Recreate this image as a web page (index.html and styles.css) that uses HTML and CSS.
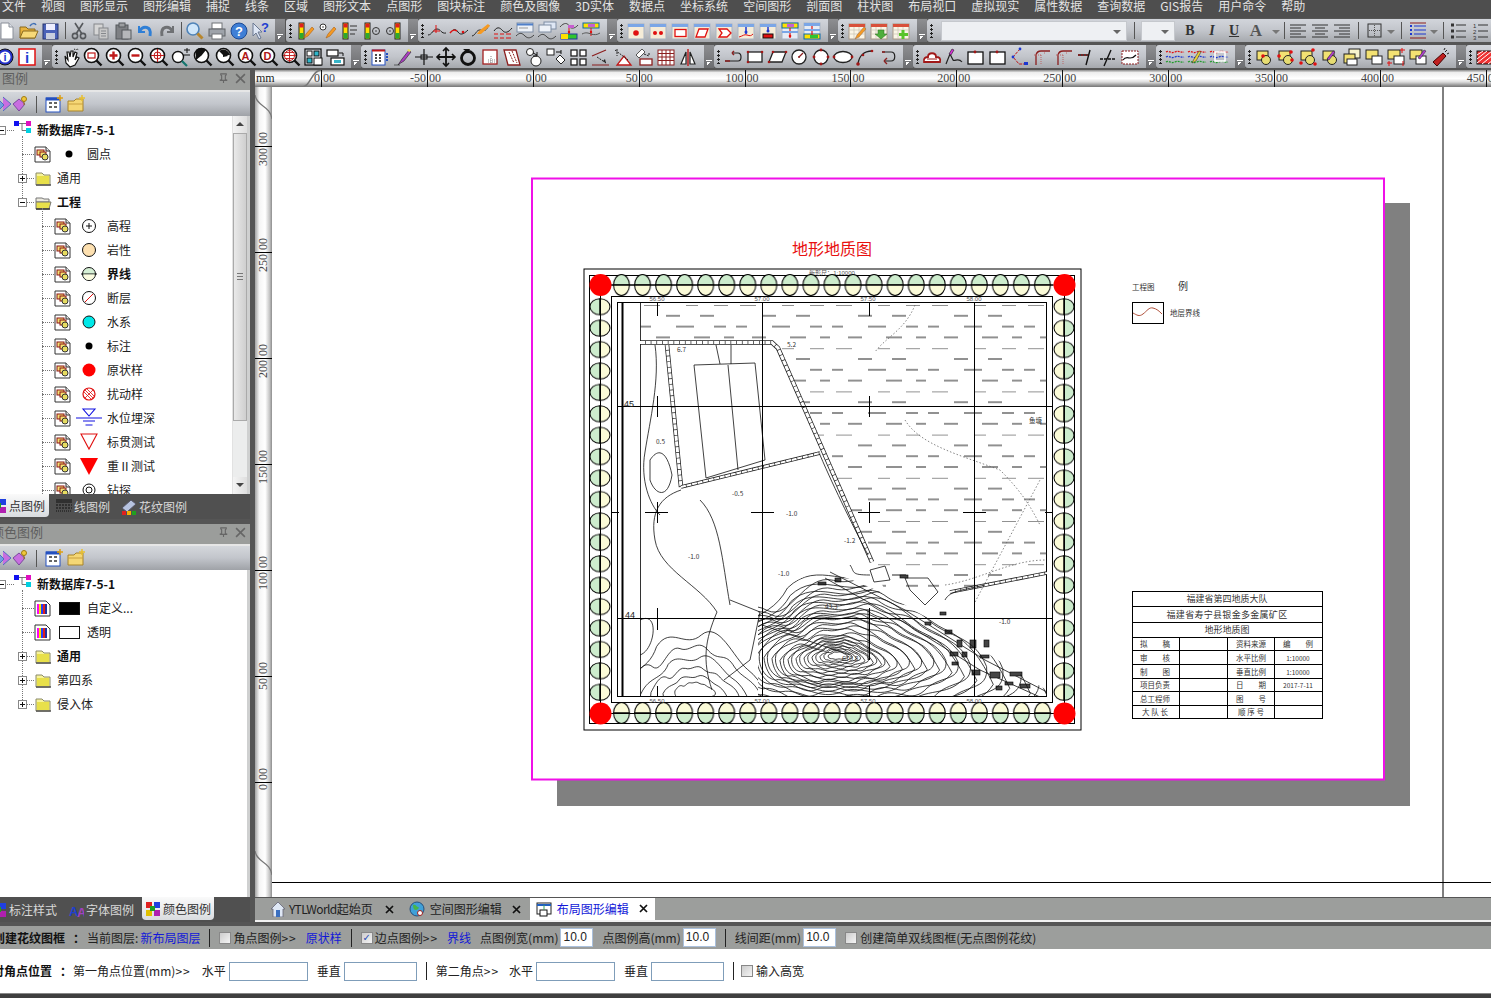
FILE: index.html
```html
<!DOCTYPE html>
<html lang="zh-CN">
<head>
<meta charset="utf-8">
<title>YTLWorld</title>
<link rel="stylesheet" href="styles.css">
</head>
<body>
<svg class="defs" aria-hidden="true">
<defs>
<g id="new"><path d="M4 2h8l4 4v12H4z" fill="#fff" stroke="#8a8f99"/><path d="M12 2v4h4" fill="#dfe3ea" stroke="#8a8f99"/></g>
<g id="open"><path d="M1 6h6l2 2h7v9H1z" fill="#e8b23c" stroke="#8a6a1e"/><path d="M4 10h15l-3 7H1z" fill="#f7d978" stroke="#8a6a1e"/><path d="M11 5c2-3 5-3 6-1" fill="none" stroke="#3f6fb5" stroke-width="1.5"/></g>
<g id="save"><rect x="2" y="3" width="15" height="15" fill="#4b62b8" stroke="#27356f"/><rect x="5" y="3" width="9" height="6" fill="#eef"/><rect x="5" y="12" width="9" height="6" fill="#c9cfdf"/></g>
<g id="cut"><path d="M6 2l7 11M14 2L7 13" stroke="#55585c" stroke-width="1.6" fill="none"/><circle cx="6" cy="15" r="2.6" fill="none" stroke="#55585c" stroke-width="1.6"/><circle cx="14" cy="15" r="2.6" fill="none" stroke="#55585c" stroke-width="1.6"/></g>
<g id="copy"><rect x="3" y="3" width="9" height="11" fill="#d5d5d5" stroke="#85888c"/><rect x="8" y="7" width="9" height="11" fill="#c8c8c8" stroke="#85888c"/><path d="M10 10h5M10 12.500h5M10 15h5" stroke="#85888c"/></g>
<g id="paste"><rect x="3" y="4" width="12" height="14" fill="#7e8084" stroke="#55585c"/><rect x="6" y="2" width="6" height="4" fill="#9b9da0" stroke="#55585c"/><rect x="9" y="9" width="9" height="9" fill="#b5b7ba" stroke="#55585c"/></g>
<g id="undo"><path d="M4 5v6h6" fill="none" stroke="#2f7fd6" stroke-width="2"/><path d="M4.500 10.500C8 4 17 5 15 15" fill="none" stroke="#2f7fd6" stroke-width="3"/></g>
<g id="redo"><path d="M16 5v6h-6" fill="none" stroke="#6f7174" stroke-width="2"/><path d="M15.500 10.500C12 4 3 5 5 15" fill="none" stroke="#6f7174" stroke-width="3"/></g>
<g id="find"><circle cx="8" cy="8" r="6" fill="#cfe6fa" stroke="#4f83b8" stroke-width="1.6"/><path d="M12.500 12.500l5 5" stroke="#b8862c" stroke-width="3"/></g>
<g id="print"><rect x="5" y="2" width="10" height="6" fill="#fff" stroke="#6f7276"/><rect x="2" y="8" width="16" height="7" fill="#9ea3aa" stroke="#5f6266"/><rect x="5" y="13" width="10" height="5" fill="#fff" stroke="#6f7276"/></g>
<g id="help"><circle cx="10" cy="10" r="8" fill="#3f7fd6" stroke="#1e4a93"/><text x="10" y="14.500" class="gl">?</text></g>
<g id="what"><path d="M2 2v13l3-3 3 6 2-1-3-6h4z" fill="#dfe7f5" stroke="#6a7892"/><text x="14" y="11" class="gl blue">?</text></g>
<g id="bar"><rect x="4" y="2" width="5" height="16" fill="#ffdf00" stroke="#222"/><rect x="4.500" y="2.500" width="4" height="4" fill="#e02020"/><rect x="4.500" y="12" width="4" height="5.500" fill="#2da82d"/></g>
<g id="pen"><path d="M9 17l2-4 6-7 2 2-6 7z" fill="#f59a23" stroke="#a8601a" stroke-width=".6"/></g>
<g id="i1"><use href="#bar"/><use href="#pen"/></g>
<g id="i2"><circle cx="6" cy="6" r="3" fill="#fff" stroke="#333"/><circle cx="6" cy="6" r=".8" fill="#333"/><use href="#pen"/></g>
<g id="i3"><use href="#bar"/><path d="M11 5h7M11 9h7M11 13h5" stroke="#333"/></g>
<g id="i4"><use href="#bar"/><circle cx="15" cy="10" r="3.500" fill="none" stroke="#333"/><circle cx="15" cy="10" r=".8" fill="#333"/></g>
<g id="i5" transform="translate(8 0)"><use href="#bar"/><circle cx="-1" cy="10" r="3.500" fill="none" stroke="#333"/><circle cx="-1" cy="10" r=".8" fill="#333"/></g>
<g id="c1"><path d="M1 14c4 0 5-6 9-6s4 5 9 4" fill="none" stroke="#222"/><path d="M9 4v8M6 10h7" stroke="#e01010"/></g>
<g id="c2"><path d="M1 12c4-5 6-4 8-1s5 3 10-2" fill="none" stroke="#222"/><path d="M1 12c3-4 5-3 7-2" fill="none" stroke="#e01010" stroke-width="1.400"/><circle cx="14" cy="11" r="1.300" fill="#e01010"/></g>
<g id="c3"><path d="M1 15c4-1 4-6 8-6s5 3 9-5" fill="none" stroke="#222"/><path d="M6 13l2-3 9-7 2 2-9 8z" fill="#f59a23"/></g>
<g id="c4"><path d="M1 10c4-6 7-2 9 0s5 2 9-3" fill="none" stroke="#222"/><path d="M1 13h4M7 13h4M13 13h5M1 17h4M7 17h4M13 17h5" stroke="#e01010"/></g>
<g id="w5"><rect x="2" y="2" width="16" height="9" fill="#eef2f8" stroke="#7f8da3"/><path d="M2 3.500h16" stroke="#4f7fc9" stroke-width="2"/><path d="M4 7h9" stroke="#999"/><path d="M1 15c4-4 6-3 9 0s6 2 9-1" fill="none" stroke="#444"/></g>
<g id="w6"><rect x="7" y="1" width="12" height="7" fill="#dfe7f5" stroke="#7f8da3"/><rect x="2" y="4" width="12" height="7" fill="#eef2f8" stroke="#7f8da3"/><path d="M1 16c4-4 6-3 9 0s6 2 9-1" fill="none" stroke="#444"/></g>
<g id="w7"><path d="M1 6c4-5 8-4 9-1s6 3 9-1" fill="none" stroke="#444"/><path d="M10 7v7" stroke="#e01010"/><circle cx="10" cy="11" r="1.200" fill="#e01010"/><rect x="2" y="13" width="16" height="5" fill="#2ec52e" stroke="#20399c"/><rect x="2" y="13" width="7" height="5" fill="#ffe000"/><path d="M9 7h6v-3H9z" fill="#c75fd0"/></g>
<g id="w8"><rect x="2" y="2" width="16" height="5" fill="#ffe000" stroke="#0a6ba8"/><rect x="7" y="3" width="7" height="3" fill="#c75fd0"/><path d="M10 7v8" stroke="#e01010"/><circle cx="10" cy="11" r="1.200" fill="#e01010"/><path d="M1 13c4-2 6-1 9 0s6 1 9-1" fill="none" stroke="#555"/></g>
<g id="win"><rect x="2" y="3" width="16" height="15" fill="#f5ecd8" stroke="#a9b3c2"/><rect x="2" y="3" width="16" height="3" fill="#7ba6e6"/></g>
<g id="p1"><use href="#win"/><circle cx="10" cy="12" r="2.800" fill="#e01010"/></g>
<g id="p2"><use href="#win"/><circle cx="7" cy="12" r="2" fill="#e01010"/><circle cx="13" cy="12" r="2" fill="#e01010"/></g>
<g id="p3"><use href="#win"/><rect x="5" y="8.500" width="11" height="7" fill="#fff" stroke="#e01010" stroke-width="1.300"/></g>
<g id="p4"><use href="#win"/><path d="M7 8h9l-3 8H4z" fill="#fff" stroke="#e01010" stroke-width="1.300"/></g>
<g id="p5"><use href="#win"/><path d="M5 8h8l4 4-4 4H5l3-4z" fill="#fff" stroke="#e01010" stroke-width="1.300"/></g>
<g id="p6"><use href="#win"/><path d="M10 6v7" stroke="#1d37d0" stroke-width="1.500"/><circle cx="10" cy="11" r="1.500" fill="#1d37d0"/><path d="M3 16c4-1 5-3 8-2s4 1 6-1" fill="none" stroke="#e01010"/></g>
<g id="p7"><use href="#win"/><path d="M10 6v5" stroke="#1d37d0" stroke-width="1.500"/><circle cx="10" cy="10" r="1.500" fill="#1d37d0"/><rect x="5" y="13" width="10" height="4" fill="#e01010" stroke="#111"/></g>
<g id="p8"><rect x="2" y="2" width="16" height="16" fill="#e6ecf5" stroke="#a9b3c2"/><rect x="2" y="2" width="16" height="5" fill="#ffe000" stroke="#0a6ba8"/><rect x="7" y="3" width="7" height="3" fill="#c75fd0"/><path d="M10 7v10" stroke="#e01010" stroke-width="1.200"/><circle cx="10" cy="15" r="1.300" fill="#e01010"/><path d="M2 11h16" stroke="#7ba6e6" stroke-width="2"/></g>
<g id="p9"><rect x="2" y="2" width="16" height="16" fill="#e6ecf5" stroke="#a9b3c2"/><path d="M2 3.500h16" stroke="#7ba6e6" stroke-width="3"/><rect x="2" y="13" width="16" height="5" fill="#ffe000" stroke="#0a6ba8"/><rect x="8" y="14" width="8" height="3" fill="#2ec52e"/><path d="M10 5v9" stroke="#e01010" stroke-width="1.200"/><path d="M2 9h16" stroke="#7ba6e6" stroke-width="2"/></g>
<g id="tab"><rect x="2" y="3" width="16" height="15" fill="#faf5e6" stroke="#a98"/><rect x="2" y="3" width="16" height="3" fill="#d8503a"/><path d="M2 9h16M2 13h16M7 6v12M12 6v12" stroke="#c9c3b3" stroke-width=".7"/></g>
<g id="t1"><use href="#tab"/><path d="M8 18l2-4 7-8 2 2-7 8z" fill="#f59a23" stroke="#865" stroke-width=".5"/></g>
<g id="t2"><use href="#tab"/><path d="M9 9h6v4h3l-6 5-6-5h3z" fill="#4fae3c" stroke="#2a6e1e" stroke-width=".5"/></g>
<g id="t3"><use href="#tab"/><path d="M12 9v9M8 13.500h9" stroke="#58c42a" stroke-width="3"/></g>
<g id="ia"><circle cx="10" cy="10" r="8" fill="#2430c8" stroke="#111"/><circle cx="10" cy="10" r="5.500" fill="#fff"/><text x="10" y="14" class="gl blue bd">i</text></g>
<g id="ib"><rect x="2" y="2" width="16" height="16" fill="#fff" stroke="#e01010" stroke-width="1.500"/><text x="10" y="15.500" class="gl blue bd big">i</text></g>
<g id="hand"><path d="M4 9l3 4-1-8 2 0 1 5 1-6 2 0 0 6 2-5 2 1-2 7 2-3 2 1-4 7-5 2-4-4z" fill="#fff" stroke="#111" stroke-width="1.200"/><path d="M13 2l2 1 1-1 2 1" stroke="#111" stroke-dasharray="1 1" fill="none"/></g>
<g id="mag"><circle cx="8.500" cy="8.500" r="7" fill="#fff" stroke="#111" stroke-width="1.600"/><path d="M13.500 13.500l5 5" stroke="#111" stroke-width="2.400"/></g>
<g id="m1"><use href="#mag"/><rect x="5" y="6" width="7" height="5" fill="none" stroke="#c01818" stroke-width="1.200"/></g>
<g id="m2"><use href="#mag"/><path d="M8.500 4.500v8M4.500 8.500h8" stroke="#c01818" stroke-width="2.400"/></g>
<g id="m3"><use href="#mag"/><path d="M4.500 8.500h8" stroke="#c01818" stroke-width="2.400"/></g>
<g id="m4"><use href="#mag"/><path d="M8.500 2v13M2 8.500h13" stroke="#c01818" stroke-width="1.100"/><circle cx="8.500" cy="8.500" r="3.500" fill="none" stroke="#c01818"/></g>
<g id="m5"><circle cx="7" cy="10" r="5.500" fill="#fff" stroke="#111" stroke-width="1.400"/><path d="M11 14l5 5" stroke="#14766e" stroke-width="2.200"/><path d="M13 3h6M16 1v5M13 8h6" stroke="#111"/></g>
<g id="m6"><use href="#mag"/><path d="M8.500 8.500L13 3a7 7 0 0 0-10 0L3 13z" fill="#111"/></g>
<g id="m7"><use href="#mag"/><path d="M8.500 8.500L15 8a7 7 0 0 0-11-4z" fill="#111"/><path d="M8 4l5 5-5 1z" fill="#111"/></g>
<g id="m8"><use href="#mag"/><text x="8.500" y="13" class="gl red bd">A</text></g>
<g id="m9"><use href="#mag"/><text x="8.500" y="13" class="gl red bd">D</text></g>
<g id="m10"><use href="#mag"/><circle cx="8.500" cy="8.500" r="5" fill="none" stroke="#c01818"/><path d="M8.500 2v13M2 8.500h13M3.500 5.500h10M3.500 11.500h10" stroke="#c01818" stroke-width=".9"/></g>
<g id="gb"><rect x="2" y="2" width="16" height="16" fill="#e8eef5" stroke="#111" stroke-width="1.300"/><rect x="4" y="4" width="5" height="5" fill="#fff" stroke="#111"/><rect x="11" y="4" width="5" height="5" fill="#2fb5c9" stroke="#111"/><rect x="4" y="11" width="5" height="5" fill="#2fb5c9" stroke="#111"/><rect x="11" y="11" width="8" height="7" fill="#fff" stroke="#111"/></g>
<g id="gc"><rect x="2" y="3" width="11" height="6" fill="#fff" stroke="#111" stroke-width="1.200"/><path d="M14 6h4v3" fill="none" stroke="#111"/><rect x="6" y="11" width="13" height="7" fill="#fff" stroke="#111" stroke-width="1.200"/><rect x="9" y="13" width="7" height="3" fill="#37b5c9"/></g>
<g id="d1"><rect x="2" y="3" width="13" height="15" fill="#fff" stroke="#2450c0"/><path d="M2 3.500h13" stroke="#c01818" stroke-width="2"/><path d="M5 8h2M9 8h2M5 11h2M9 11h2M5 14h2M9 14h2" stroke="#111" stroke-width="1.500"/><path d="M17 6v8" stroke="#2450c0" stroke-dasharray="2 1" stroke-width="2"/></g>
<g id="d2"><path d="M2 18h6M6 18l4-6 7-9 2 2-7 9-5 3z" fill="#a93fc0" stroke="#222" stroke-width=".6"/><path d="M15 3l2 2 2-1-2-2z" fill="#e8e25a"/></g>
<g id="d3"><path d="M10 2v16M1 10h18" stroke="#111" stroke-width="1.200"/><rect x="7" y="8" width="6" height="4" fill="none" stroke="#111"/></g>
<g id="d4"><path d="M10 1v18M1 10h18" stroke="#111" stroke-width="1.800"/><path d="M7 4l3-3 3 3M7 16l3 3 3-3M4 7l-3 3 3 3M16 7l3 3-3 3" fill="none" stroke="#111" stroke-width="1.600"/></g>
<g id="d5"><circle cx="10" cy="11" r="6.500" fill="none" stroke="#111" stroke-width="2.800"/><path d="M5 2l7 0-2 4z" fill="#111"/></g>
<g id="d6"><rect x="3" y="3" width="14" height="14" fill="#fff" stroke="#a32020" stroke-width="1.300"/><path d="M8 13h9M8 15h9M11 9v8" stroke="#888" stroke-dasharray="1 1"/></g>
<g id="d7"><path d="M2 3h12l4 15H6z" fill="#fff" stroke="#8c1f1f" stroke-width="1.300"/><path d="M7 5l5 11M10 4l5 12" stroke="#8c1f1f" stroke-dasharray="2 1"/></g>
<g id="d8"><circle cx="6" cy="5" r="3.500" fill="#fff" stroke="#222"/><circle cx="12" cy="14" r="5" fill="#fff" stroke="#222"/><path d="M9 6l4 2M13 5v4h-4" fill="none" stroke="#111"/></g>
<g id="d9"><rect x="1" y="2" width="7" height="6" fill="#fff" stroke="#222"/><path d="M10 12l4-4 5 5-4 4z" fill="#fff" stroke="#222"/><path d="M10 5h5M15 3v4" stroke="#111"/></g>
<g id="d10"><rect x="3" y="3" width="6" height="6" fill="#fff" stroke="#222" stroke-width="1.300"/><rect x="12" y="3" width="6" height="6" fill="#fff" stroke="#222" stroke-width="1.300"/><rect x="3" y="12" width="6" height="6" fill="#fff" stroke="#222" stroke-width="1.300"/><rect x="12" y="12" width="6" height="6" fill="#fff" stroke="#222" stroke-width="1.300"/></g>
<g id="d11"><path d="M2 18h17M2 9l14-6" stroke="#8c1f1f" stroke-width="1.200"/><path d="M7 10l9 6" stroke="#222" stroke-dasharray="2 1"/><path d="M13 14l3 2-1-4" fill="#222"/></g>
<g id="d12"><path d="M5 18h14L12 9z" fill="#fff" stroke="#c01818" stroke-width="1.300"/><path d="M3 3l13 10M5 2v7" stroke="#222" stroke-dasharray="2 1"/></g>
<g id="d13"><rect x="6" y="12" width="12" height="6" fill="#fff" stroke="#8c1f1f" stroke-width="1.300"/><path d="M2 8l6-6 3 3-6 6z" fill="#fff" stroke="#555"/><path d="M10 7l5 2M15 6v3" stroke="#222" stroke-dasharray="2 1"/></g>
<g id="d14"><rect x="2" y="3" width="16" height="15" fill="#fff" stroke="#8c1f1f"/><path d="M2 6.500h16M2 10h16M2 13.500h16M6 3v15M10 3v15M14 3v15" stroke="#8c1f1f"/></g>
<g id="d15"><path d="M3 17l5-12v12zM17 17l-5-12v12z" fill="#fff" stroke="#222" stroke-width="1.200"/><path d="M10 2v17" stroke="#c01818" stroke-width="1.400"/></g>
<g id="e1"><path d="M2 14h13c4 0 4-8 0-8H9" fill="none" stroke="#222" stroke-width="1.200"/><path d="M2 14h5M9 6l2-2M9 6l2 2" stroke="#8c1f1f" stroke-width="1.500"/></g>
<g id="e2"><rect x="3" y="5" width="14" height="10" fill="#fff" stroke="#222" stroke-width="1.300"/><g fill="#a01818"><circle cx="3" cy="5" r="1.300"/><circle cx="17" cy="5" r="1.300"/><circle cx="3" cy="15" r="1.300"/></g></g>
<g id="e3"><path d="M6 5h13l-4 10H2z" fill="#fff" stroke="#222" stroke-width="1.300"/><g fill="#a01818"><circle cx="6" cy="5" r="1.300"/><circle cx="19" cy="5" r="1.300"/><circle cx="2" cy="15" r="1.300"/></g></g>
<g id="e4"><circle cx="10" cy="10" r="7" fill="#fff" stroke="#222" stroke-width="1.300"/><path d="M10 10l4-4" stroke="#8c1f1f" stroke-width="1.300"/><circle cx="10" cy="10" r="1" fill="#8c1f1f"/></g>
<g id="e5"><circle cx="10" cy="10" r="7" fill="#fff" stroke="#222" stroke-width="1.300"/><g fill="#a01818"><circle cx="10" cy="3" r="1.400"/><circle cx="3" cy="10" r="1.400"/><circle cx="17" cy="10" r="1.400"/><circle cx="10" cy="17" r="1.400"/></g></g>
<g id="e6"><ellipse cx="10" cy="10" rx="9" ry="5.500" fill="#fff" stroke="#222" stroke-width="1.300"/><circle cx="1" cy="10" r="1.400" fill="#a01818"/><circle cx="19" cy="10" r="1.400" fill="#a01818"/></g>
<g id="e7"><path d="M3 17C4 9 9 4 17 4" fill="none" stroke="#222" stroke-width="1.300"/><circle cx="3" cy="17" r="1.800" fill="#a01818"/><circle cx="8" cy="8" r="1.300" fill="#a01818"/><circle cx="17" cy="4" r="1.300" fill="#a01818"/></g>
<g id="e8"><path d="M5 5h9c5 0 5 9 0 9H7" fill="none" stroke="#222" stroke-width="1.200"/><path d="M7 14l3-3M7 14l3 3M5 5h3" stroke="#8c1f1f" stroke-width="1.400"/></g>
<g id="f1"><path d="M2 15c-1-4 2-5 4-5 0-5 8-5 8 0 3 0 5 1 4 5z" fill="#fff" stroke="#a01818" stroke-width="1.800"/><path d="M5 12h10" stroke="#a01818"/></g>
<g id="f2"><path d="M2 17l4-10 3 6c2 2 5-3 9 2" fill="none" stroke="#222" stroke-width="1.200"/><path d="M5 7l3-5 2 1-3 5z" fill="#d72fd7" stroke="#222" stroke-width=".6"/></g>
<g id="f3"><rect x="2" y="5" width="15" height="12" fill="#fff" stroke="#111" stroke-width="1.300"/><circle cx="9" cy="5" r="1.400" fill="#a01818"/></g>
<g id="f4"><path d="M10 2L3 10l6 7h7" fill="none" stroke="#c01818" stroke-dasharray="3 1"/><g fill="#1d37d0"><circle cx="10" cy="2" r="1.400"/><circle cx="3" cy="10" r="1.400"/><rect x="14" y="15" width="4" height="3"/></g></g>
<g id="f5"><path d="M4 18v-10q1-4 5-4h9" fill="none" stroke="#8c1f1f" stroke-width="1.300"/><path d="M2 8h7M9 8v9M12 6h2" stroke="#b66" stroke-dasharray="1 1"/></g>
<g id="f6"><path d="M2 8h10M14 3l-4 15" stroke="#111" stroke-width="1.400"/><path d="M2 8h10" stroke="#8c1f1f" stroke-dasharray="2 1" stroke-width="1.600"/></g>
<g id="f7"><path d="M2 12h16" stroke="#111" stroke-width="1.400" stroke-dasharray="3 1"/><path d="M13 3L6 19" stroke="#111" stroke-width="1.400"/></g>
<g id="f8"><rect x="2" y="4" width="16" height="13" fill="#fff" stroke="#8c1f1f" stroke-dasharray="2 1"/><path d="M3 13c4-6 7 2 13-5" fill="none" stroke="#111" stroke-width="1.200"/></g>
<g id="wv"><path d="M1 5c3-2 5 2 9 0s6 1 9 0" fill="none" stroke="#e01010" stroke-width="1.300" stroke-dasharray="2 1"/><path d="M1 10c3-2 5 2 9 0s6 1 9 0" fill="none" stroke="#1d37d0" stroke-width="1.300" stroke-dasharray="2 1"/><path d="M1 15c3-2 5 2 9 0s6 1 9 0" fill="none" stroke="#1f9c2a" stroke-width="1.300" stroke-dasharray="2 1"/></g>
<g id="g1"><use href="#wv"/></g>
<g id="g2"><use href="#wv"/><path d="M5 16l2-4 5-8 2 1-5 9z" fill="#e8d13a" stroke="#222" stroke-width=".5"/></g>
<g id="g3"><use href="#wv"/><rect x="6" y="5" width="10" height="9" fill="none" stroke="#fff" stroke-width="1.600"/></g>
<g id="ys"><rect x="3" y="4" width="11" height="9" fill="#f3e172" stroke="#222"/><circle cx="12" cy="13" r="4.500" fill="#e6dc72" stroke="#222"/></g>
<g id="h1"><use href="#ys"/><circle cx="9" cy="9" r="1.800" fill="#e01010"/></g>
<g id="h2"><use href="#ys"/><circle cx="3" cy="9" r="1.800" fill="#e01010"/><circle cx="15" cy="5" r="1.800" fill="#e01010"/><circle cx="16" cy="13" r="1.800" fill="#e01010"/></g>
<g id="h3"><use href="#ys"/><circle cx="15" cy="3" r="1.800" fill="#e01010"/><circle cx="3" cy="16" r="1.800" fill="#e01010"/><circle cx="17" cy="17" r="1.800" fill="#e01010"/></g>
<g id="h4"><use href="#ys"/><path d="M7 12l6-8 2 1-6 8z" fill="#b040d0" stroke="#222" stroke-width=".5"/></g>
<g id="h5"><rect x="7" y="2" width="11" height="9" fill="#f8f4cc" stroke="#222"/><rect x="2" y="7" width="11" height="9" fill="#f3e172" stroke="#222"/><rect x="5" y="12" width="10" height="6" fill="#fff" stroke="#222"/></g>
<g id="h6"><rect x="2" y="3" width="12" height="9" fill="#f3e172" stroke="#222"/><rect x="8" y="9" width="10" height="8" fill="#fff" stroke="#222"/></g>
<g id="h7"><use href="#h6"/><path d="M16 1v5M14 3h5M3 14v5M1 16h5M17 14v5" stroke="#e01010"/></g>
<g id="h8"><use href="#h6"/><path d="M10 11l6-8 2 1-6 8z" fill="#b040d0" stroke="#222" stroke-width=".5"/></g>
<g id="h9"><path d="M3 15L13 6l3 3-9 10z" fill="#c02020" stroke="#400"/><path d="M15 5l2-2M17 7l2-1M14 3l1-2" stroke="#222"/></g>
<g id="h10"><rect x="2" y="4" width="16" height="13" fill="#e33" stroke="#111"/><path d="M2 8l6-4M2 12l10-8M2 16l15-12M7 17L18 8M13 17l5-4" stroke="#fff"/></g>
<g id="al"><path d="M2 4h16M2 7h11M2 10h16M2 13h11M2 16h16" stroke="#333"/></g>
<g id="ac"><path d="M2 4h16M5 7h10M2 10h16M5 13h10M2 16h16" stroke="#333"/></g>
<g id="ar"><path d="M2 4h16M7 7h11M2 10h16M7 13h11M2 16h16" stroke="#333"/></g>
<g id="box"><rect x="3" y="3" width="13" height="13" fill="none" stroke="#333"/><path d="M9.500 4v11M4 9.500h11" stroke="#555" stroke-dasharray="1 1"/></g>
<g id="lst"><path d="M2 2h16" stroke="#8c1f1f"/><path d="M2 17h16" stroke="#8c1f1f"/><path d="M2 5h2M2 9h2M2 13h2" stroke="#1d37d0" stroke-width="2"/><path d="M6 5h12M6 9h12M6 13h12" stroke="#1d37d0"/></g>
<g id="bul"><path d="M3 4h3M3 10h3M3 16h3" stroke="#333" stroke-width="3"/><path d="M8 4h10M8 10h10M8 16h10" stroke="#333"/></g>
<g id="num"><text x="3" y="7" class="tiny">1</text><text x="3" y="13" class="tiny">2</text><text x="3" y="19" class="tiny">3</text><path d="M8 4h10M8 10h10M8 16h10" stroke="#333"/></g>
<g id="gm2"><path d="M10 5l6 5-6 7-6-7z" fill="#c86ee0" stroke="#7a4a9c"/><circle cx="15" cy="5" r="2.500" fill="#f0c83c" stroke="#a07a10"/><path d="M15 7v4" stroke="#a07a10"/></g>
<g id="gm1"><path d="M10 3l8 7-8 7" fill="#c86ee0" stroke="#4f6fc0"/><path d="M6 6l5 5-5 5" fill="#6fa0e0" stroke="#4f6fc0"/></g>
<g id="pnew"><rect x="2" y="4" width="14" height="14" fill="#fff" stroke="#2450c0"/><path d="M2 5h14" stroke="#2450c0" stroke-width="3"/><path d="M5 9h3M10 9h3M5 13h3M10 13h3" stroke="#333" stroke-width="1.500"/><path d="M16 1v6M13 4h6" stroke="#e0a010" stroke-width="1.500"/></g>
<g id="pfol"><path d="M2 7h6l2-2h7v12H2z" fill="#f5d775" stroke="#a8842a"/><path d="M2 10h15" stroke="#c9a040"/><path d="M16 1v6M13 4h6" stroke="#e8c030" stroke-width="1.500"/></g>
<g id="lg"><path d="M1 1h11l4 4v11H1z" fill="#fff" stroke="#333"/><path d="M12 1v4h4" fill="#e5e5e5" stroke="#333"/><rect x="3" y="4" width="7" height="5" fill="#f3e172" stroke="#8c1515"/><rect x="6" y="6" width="6" height="5" fill="#f3e172" stroke="#8c1515"/><circle cx="11" cy="11" r="3" fill="#e6dc60" stroke="#333"/></g>
<g id="col"><path d="M1 1h11l4 4v11H1z" fill="#fff" stroke="#333"/><rect x="3" y="4" width="2" height="10" fill="#ff00ff"/><rect x="5" y="4" width="2" height="10" fill="#f4e000"/><rect x="7" y="4" width="2" height="10" fill="#2040ff"/><rect x="9" y="4" width="2" height="10" fill="#e02020"/><rect x="11" y="4" width="2" height="10" fill="#2030a0"/></g>
<g id="fd"><path d="M1 3h6l2 2h6v10H1z" fill="#f7f39a" stroke="#8a8a6a"/><rect x="2" y="6" width="12" height="8" fill="#e8e04a"/><path d="M1 15h15" stroke="#555" stroke-width="1.500"/></g>
<g id="fo"><path d="M1 4h6l2 1h5v3H1z" fill="#eceadf" stroke="#777"/><path d="M1 8h15l-2 7H1z" fill="#e8e04a" stroke="#777"/><path d="M1 15h14" stroke="#333" stroke-width="1.500"/></g>
<g id="rt"><rect x="0" y="0" width="5" height="5" fill="#1010f0"/><rect x="12" y="0" width="5" height="5" fill="#e010c0"/><rect x="12" y="7" width="5" height="5" fill="#00d0e0"/><path d="M5 2.500h7M8 2.500v7h4" fill="none" stroke="#555" stroke-width=".8"/></g>
<g id="sp1"><circle cx="12" cy="12" r="6.500" fill="#fff" stroke="#111"/><path d="M12 9v6M9 12h6" stroke="#111"/></g>
<g id="sp2"><circle cx="12" cy="12" r="6.500" fill="#fde0b0" stroke="#111"/></g>
<g id="sp3"><path d="M12 5.500a6.500 6.500 0 0 1 0 13a6.500 6.500 0 0 1 0-13" fill="#d5f0d5" stroke="#111"/><path d="M4 12h16" stroke="#111"/><path d="M6.500 12.500h11a5.500 5.500 0 0 1-11 0" fill="#fbfbe0"/></g>
<g id="sp4"><circle cx="12" cy="12" r="6.500" fill="#fff" stroke="#111"/><path d="M8 16l8-8" stroke="#e01010"/></g>
<g id="sp5"><circle cx="12" cy="12" r="6" fill="#00e8e8" stroke="#111"/></g>
<g id="sp6"><circle cx="12" cy="12" r="3.500" fill="#000"/></g>
<g id="sp7"><circle cx="12" cy="12" r="6.500" fill="#f00"/></g>
<g id="sp8"><circle cx="12" cy="12" r="6" fill="#fff" stroke="#e01010" stroke-width="1.200"/><path d="M8 8l8 8M16 8l-8 8M9 6l9 9M6 9l9 9" stroke="#e01010" stroke-width=".8"/></g>
<g id="sp9"><path d="M6 3h12l-6 7zM-1 12h26M6 15h12M8.500 19h7" fill="none" stroke="#1010e0" stroke-width="1.100"/></g>
<g id="sp10"><path d="M4 4h16l-8 15z" fill="#fff" stroke="#e01010" stroke-width="1.100"/></g>
<g id="sp11"><path d="M3 4h18l-9 17z" fill="#f00"/></g>
<g id="sp12"><circle cx="12" cy="12" r="6" fill="none" stroke="#111"/><circle cx="12" cy="12" r="3" fill="none" stroke="#111"/></g>
<g id="xx"><path d="M1 1l7 7M8 1L1 8" stroke="#111" stroke-width="1.700"/></g>
<g id="pin"><path d="M3 1h6v1l-1 1v4l2 1H2l2-1V3L3 2zM6 8v3" fill="none" stroke="#666" stroke-width="1.200"/></g>
<g id="cl"><path d="M1 1l8 8M9 1L1 9" stroke="#666" stroke-width="1.400"/></g>
<g id="home"><path d="M8 1L1 8h2v8h10V8h2z" fill="#dfe8f5" stroke="#667" stroke-width=".8"/><rect x="6" y="9" width="4" height="7" fill="#3a6fc0"/></g>
<g id="globe"><circle cx="8" cy="8" r="7" fill="#3fa0d8" stroke="#26507c"/><path d="M4 4c3-1 3 2 5 2s0 3-2 3-3-2-3-5zM10 10c2-1 3 0 3 1s-3 3-3-1z" fill="#47b548"/><circle cx="11" cy="12" r="2.500" fill="#fff" stroke="#a02020"/></g>
<g id="lay"><rect x="1" y="2" width="14" height="11" fill="#fff" stroke="#222"/><path d="M1 4h14" stroke="#2060c0" stroke-width="2"/><rect x="4" y="9" width="7" height="6" fill="#fff" stroke="#111"/><path d="M8 4v5" stroke="#38a060"/></g>
<g id="lin"><path d="M0 1h16M0 3h16" stroke="#111"/><path d="M0 6h16M0 9h16" stroke="#111" stroke-dasharray="2 1"/><path d="M0 12h16" stroke="#111" stroke-dasharray="1 1"/></g>
<g id="pat"><path d="M1 9L10 1l5 4-9 8z" fill="#b7c3e0" stroke="#556"/><rect x="1" y="12" width="4" height="4" fill="#e02020"/><rect x="6" y="12" width="4" height="4" fill="#f4b000"/><rect x="11" y="12" width="4" height="4" fill="#20a020"/></g>
<g id="txt"><text x="1" y="14" class="gl blue big2">A</text><text x="9" y="15" class="gl violet big2">A</text></g>
<g id="cg"><rect x="1" y="1" width="6" height="6" fill="#e02020"/><rect x="9" y="1" width="6" height="6" fill="#2040e0"/><rect x="1" y="9" width="6" height="6" fill="#e0c000"/><rect x="9" y="9" width="6" height="6" fill="#b020b0"/><rect x="5" y="5" width="5" height="5" fill="#20a020"/></g>
<g id="oval-t"><path d="M-8 0a8 10.500 0 0 1 16 0z" fill="#cdeccd" stroke="#000"/><path d="M-8 0a8 10.500 0 0 0 16 0z" fill="#fbfbd8" stroke="#000"/></g>
<g id="oval-b"><path d="M-8 0a8 10.500 0 0 1 16 0z" fill="#fbfbd8" stroke="#000"/><path d="M-8 0a8 10.500 0 0 0 16 0z" fill="#cdeccd" stroke="#000"/></g>
<g id="oval-l"><path d="M0 -8a10 8 0 0 0 0 16z" fill="#cdeccd" stroke="#000"/><path d="M0 -8a10 8 0 0 1 0 16z" fill="#fbfbd8" stroke="#000"/></g>
<g id="oval-r"><path d="M0 -8a10 8 0 0 0 0 16z" fill="#fbfbd8" stroke="#000"/><path d="M0 -8a10 8 0 0 1 0 16z" fill="#cdeccd" stroke="#000"/></g>
<pattern id="pt" patternUnits="userSpaceOnUse" x="611" y="274" width="21.050" height="22"><use href="#oval-t" x="10.500" y="11"/></pattern>
<pattern id="pb" patternUnits="userSpaceOnUse" x="611" y="703" width="21.050" height="22"><use href="#oval-b" x="10.500" y="10"/></pattern>
<pattern id="pl" patternUnits="userSpaceOnUse" x="589" y="296" width="22" height="21.420"><use href="#oval-l" x="11" y="10.700"/></pattern>
<pattern id="pr" patternUnits="userSpaceOnUse" x="1053" y="296" width="22" height="21.420"><use href="#oval-r" x="11" y="10.700"/></pattern>
<pattern id="marsh" patternUnits="userSpaceOnUse" x="640" y="305" width="96" height="43.200">
<path d="M4 0h16M46 0h12M74 0h14M26 10.800h14M60 10.800h14M0 21.600h11M36 21.600h18M74 21.600h12M16 32.400h14M54 32.400h16M84 32.400h10" stroke="#222" stroke-width="1" fill="none"/>
</pattern>
<clipPath id="mapc"><rect x="640" y="302" width="407" height="395"/></clipPath>
<clipPath id="hillc"><path d="M758 602C790 585 810 570 825 572S880 590 905 605 960 635 990 655 1030 680 1047 690V697H758z"/></clipPath>
<clipPath id="lowc"><path d="M640 632C670 622 720 640 758 618V697H640z"/></clipPath>
<clipPath id="wetc"><path d="M640 302H1047V573L950 592 885 590 872 566 778 345H640z"/></clipPath>
<path id="blob" d="M-100 10C-85 -18 -60 -10 -48 -30C-30 -45 -12 -28 8 -38C30 -48 48 -22 66 -14C85 -6 95 8 104 26C92 44 72 36 55 48C32 60 15 42 -6 52C-30 62 -48 42 -66 46C-85 48 -98 32 -100 10Z"/>
<path id="blob2" d="M-100 4C-90 -10 -78 -28 -62 -20C-48 -14 -40 -40 -22 -36C-6 -32 4 -46 20 -34C36 -24 44 -34 58 -20C72 -8 92 -10 102 14C104 34 84 26 70 42C54 56 42 34 22 50C4 62 -14 40 -34 52C-52 60 -66 36 -82 40C-94 38 -104 22 -100 4Z"/>
</defs>
</svg>

<div class="app">
<nav class="menu"><span>文件</span><span>视图</span><span>图形显示</span><span>图形编辑</span><span>捕捉</span><span>线条</span><span>区域</span><span>图形文本</span><span>点图形</span><span>图块标注</span><span>颜色及图像</span><span>3D实体</span><span>数据点</span><span>坐标系统</span><span>空间图形</span><span>剖面图</span><span>柱状图</span><span>布局视口</span><span>虚拟现实</span><span>属性数据</span><span>查询数据</span><span>GIS报告</span><span>用户命令</span><span>帮助</span></nav>

<div class="tb">
<div class="pill first1">
<svg class="s" viewBox="-1 -1 22 22"><use href="#new"/></svg><svg class="s" viewBox="-1 -1 22 22"><use href="#open"/></svg><svg class="s" viewBox="-1 -1 22 22"><use href="#save"/></svg><b class="sep"></b><svg class="s" viewBox="-1 -1 22 22"><use href="#cut"/></svg><svg class="s" viewBox="-1 -1 22 22"><use href="#copy"/></svg><svg class="s" viewBox="-1 -1 22 22"><use href="#paste"/></svg><svg class="s" viewBox="-1 -1 22 22"><use href="#undo"/></svg><svg class="s" viewBox="-1 -1 22 22"><use href="#redo"/></svg><b class="sep"></b><svg class="s" viewBox="-1 -1 22 22"><use href="#find"/></svg><svg class="s" viewBox="-1 -1 22 22"><use href="#print"/></svg><svg class="s" viewBox="-1 -1 22 22"><use href="#help"/></svg><svg class="s" viewBox="-1 -1 22 22"><use href="#what"/></svg>
</div><i class="chev wide"></i>
<div class="pill p4"><i class="grip"></i><svg class="s" viewBox="-1 -1 22 22"><use href="#i1"/></svg><svg class="s" viewBox="-1 -1 22 22"><use href="#i2"/></svg><svg class="s" viewBox="-1 -1 22 22"><use href="#i3"/></svg><svg class="s" viewBox="-1 -1 22 22"><use href="#i4"/></svg><svg class="s" viewBox="-1 -1 22 22"><use href="#i5"/></svg></div><i class="chev"></i>
<div class="pill"><i class="grip"></i><svg class="s" viewBox="-1 -1 22 22"><use href="#c1"/></svg><svg class="s" viewBox="-1 -1 22 22"><use href="#c2"/></svg><svg class="s" viewBox="-1 -1 22 22"><use href="#c3"/></svg><svg class="s" viewBox="-1 -1 22 22"><use href="#c4"/></svg><svg class="s" viewBox="-1 -1 22 22"><use href="#w5"/></svg><svg class="s" viewBox="-1 -1 22 22"><use href="#w6"/></svg><svg class="s" viewBox="-1 -1 22 22"><use href="#w7"/></svg><svg class="s" viewBox="-1 -1 22 22"><use href="#w8"/></svg></div><i class="chev"></i>
<div class="pill"><i class="grip"></i><svg class="s" viewBox="-1 -1 22 22"><use href="#p1"/></svg><svg class="s" viewBox="-1 -1 22 22"><use href="#p2"/></svg><svg class="s" viewBox="-1 -1 22 22"><use href="#p3"/></svg><svg class="s" viewBox="-1 -1 22 22"><use href="#p4"/></svg><svg class="s" viewBox="-1 -1 22 22"><use href="#p5"/></svg><svg class="s" viewBox="-1 -1 22 22"><use href="#p6"/></svg><svg class="s" viewBox="-1 -1 22 22"><use href="#p7"/></svg><svg class="s" viewBox="-1 -1 22 22"><use href="#p8"/></svg><svg class="s" viewBox="-1 -1 22 22"><use href="#p9"/></svg></div><i class="chev"></i>
<div class="pill"><i class="grip"></i><svg class="s" viewBox="-1 -1 22 22"><use href="#t1"/></svg><svg class="s" viewBox="-1 -1 22 22"><use href="#t2"/></svg><svg class="s" viewBox="-1 -1 22 22"><use href="#t3"/></svg></div><i class="chev"></i>
<div class="pill grow"><i class="grip"></i>
<span class="combo big"><i class="car"></i></span><b class="sep w6"></b><span class="combo small"><i class="car"></i></span>
<span class="fmt b">B</span><span class="fmt it">I</span><span class="fmt u">U</span><span class="fmt a">A</span><i class="cr c13"><i class="car"></i></i><b class="sep"></b>
<svg class="s" viewBox="-1 -1 22 22"><use href="#al"/></svg><svg class="s" viewBox="-1 -1 22 22"><use href="#ac"/></svg><svg class="s" viewBox="-1 -1 22 22"><use href="#ar"/></svg><b class="sep w11"></b>
<svg class="s" viewBox="-1 -1 22 22"><use href="#box"/></svg><i class="cr"><i class="car"></i></i><b class="sep w11"></b>
<svg class="s" viewBox="-1 -1 22 22"><use href="#lst"/></svg><i class="cr"><i class="car"></i></i><b class="sep w8"></b>
<svg class="s" viewBox="-1 -1 22 22"><use href="#bul"/></svg><svg class="s" viewBox="-1 -1 22 22"><use href="#num"/></svg>
</div>
</div>

<div class="tb">
<div class="pill first2"><svg class="s" viewBox="-1 -1 22 22"><use href="#ia"/></svg><svg class="s" viewBox="-1 -1 22 22"><use href="#ib"/></svg></div><i class="chev"></i>
<div class="pill"><i class="grip"></i><svg class="s" viewBox="-1 -1 22 22"><use href="#hand"/></svg><svg class="s" viewBox="-1 -1 22 22"><use href="#m1"/></svg><svg class="s" viewBox="-1 -1 22 22"><use href="#m2"/></svg><svg class="s" viewBox="-1 -1 22 22"><use href="#m3"/></svg><svg class="s" viewBox="-1 -1 22 22"><use href="#m4"/></svg><svg class="s" viewBox="-1 -1 22 22"><use href="#m5"/></svg><svg class="s" viewBox="-1 -1 22 22"><use href="#m6"/></svg><svg class="s" viewBox="-1 -1 22 22"><use href="#m7"/></svg><svg class="s" viewBox="-1 -1 22 22"><use href="#m8"/></svg><svg class="s" viewBox="-1 -1 22 22"><use href="#m9"/></svg><svg class="s" viewBox="-1 -1 22 22"><use href="#m10"/></svg><svg class="s" viewBox="-1 -1 22 22"><use href="#gb"/></svg><svg class="s" viewBox="-1 -1 22 22"><use href="#gc"/></svg></div><i class="chev"></i>
<div class="pill"><i class="grip"></i><svg class="s" viewBox="-1 -1 22 22"><use href="#d1"/></svg><svg class="s" viewBox="-1 -1 22 22"><use href="#d2"/></svg><svg class="s" viewBox="-1 -1 22 22"><use href="#d3"/></svg><svg class="s" viewBox="-1 -1 22 22"><use href="#d4"/></svg><svg class="s" viewBox="-1 -1 22 22"><use href="#d5"/></svg><svg class="s" viewBox="-1 -1 22 22"><use href="#d6"/></svg><svg class="s" viewBox="-1 -1 22 22"><use href="#d7"/></svg><svg class="s" viewBox="-1 -1 22 22"><use href="#d8"/></svg><svg class="s" viewBox="-1 -1 22 22"><use href="#d9"/></svg><svg class="s" viewBox="-1 -1 22 22"><use href="#d10"/></svg><svg class="s" viewBox="-1 -1 22 22"><use href="#d11"/></svg><svg class="s" viewBox="-1 -1 22 22"><use href="#d12"/></svg><svg class="s" viewBox="-1 -1 22 22"><use href="#d13"/></svg><svg class="s" viewBox="-1 -1 22 22"><use href="#d14"/></svg><svg class="s" viewBox="-1 -1 22 22"><use href="#d15"/></svg></div><i class="chev"></i>
<div class="pill"><i class="grip"></i><svg class="s" viewBox="-1 -1 22 22"><use href="#e1"/></svg><svg class="s" viewBox="-1 -1 22 22"><use href="#e2"/></svg><svg class="s" viewBox="-1 -1 22 22"><use href="#e3"/></svg><svg class="s" viewBox="-1 -1 22 22"><use href="#e4"/></svg><svg class="s" viewBox="-1 -1 22 22"><use href="#e5"/></svg><svg class="s" viewBox="-1 -1 22 22"><use href="#e6"/></svg><svg class="s" viewBox="-1 -1 22 22"><use href="#e7"/></svg><svg class="s" viewBox="-1 -1 22 22"><use href="#e8"/></svg></div><i class="chev"></i>
<div class="pill"><i class="grip"></i><svg class="s" viewBox="-1 -1 22 22"><use href="#f1"/></svg><svg class="s" viewBox="-1 -1 22 22"><use href="#f2"/></svg><svg class="s" viewBox="-1 -1 22 22"><use href="#f3"/></svg><svg class="s" viewBox="-1 -1 22 22"><use href="#f3"/></svg><svg class="s" viewBox="-1 -1 22 22"><use href="#f4"/></svg><svg class="s" viewBox="-1 -1 22 22"><use href="#f5"/></svg><svg class="s" viewBox="-1 -1 22 22"><use href="#f5"/></svg><svg class="s" viewBox="-1 -1 22 22"><use href="#f6"/></svg><svg class="s" viewBox="-1 -1 22 22"><use href="#f7"/></svg><svg class="s" viewBox="-1 -1 22 22"><use href="#f8"/></svg></div><i class="chev"></i>
<div class="pill"><i class="grip"></i><svg class="s" viewBox="-1 -1 22 22"><use href="#g1"/></svg><svg class="s" viewBox="-1 -1 22 22"><use href="#g2"/></svg><svg class="s" viewBox="-1 -1 22 22"><use href="#g3"/></svg></div><i class="chev"></i>
<div class="pill"><i class="grip"></i><svg class="s" viewBox="-1 -1 22 22"><use href="#h1"/></svg><svg class="s" viewBox="-1 -1 22 22"><use href="#h2"/></svg><svg class="s" viewBox="-1 -1 22 22"><use href="#h3"/></svg><svg class="s" viewBox="-1 -1 22 22"><use href="#h4"/></svg><svg class="s" viewBox="-1 -1 22 22"><use href="#h5"/></svg><svg class="s" viewBox="-1 -1 22 22"><use href="#h6"/></svg><svg class="s" viewBox="-1 -1 22 22"><use href="#h7"/></svg><svg class="s" viewBox="-1 -1 22 22"><use href="#h8"/></svg><svg class="s" viewBox="-1 -1 22 22"><use href="#h9"/></svg></div><i class="chev"></i>
<div class="pill grow"><i class="grip"></i><svg class="s" viewBox="-1 -1 22 22"><use href="#h10"/></svg></div>
</div>

<div class="main">
<aside class="dock">
<section class="panel pa">
<header class="ptitle"><span>图例</span><span class="pbtns"><svg class="pi" viewBox="0 0 12 12"><use href="#pin"/></svg><svg class="pi" viewBox="0 0 10 10"><use href="#cl"/></svg></span></header>
<div class="ptools"><svg class="s off" viewBox="-1 -1 22 22"><use href="#gm1"/></svg><svg class="s k" viewBox="-1 -1 22 22"><use href="#gm2"/></svg><b class="sep w6"></b><svg class="s" viewBox="-1 -1 22 22"><use href="#pnew"/></svg><svg class="s" viewBox="-1 -1 22 22"><use href="#pfol"/></svg></div>
<div class="twrap">
<div class="tree">
<div class="row root"><i class="bx minus off2"></i><svg class="rt" viewBox="0 0 17 12"><use href="#rt"/></svg><span class="lb strong">新数据库7-5-1</span></div>
<div class="branch">
<div class="row leaf"><svg class="dc" viewBox="0 0 17 17"><use href="#lg"/></svg><svg class="sy" viewBox="0 0 24 24"><use href="#sp6"/></svg><span>圆点</span></div>
<div class="row fold"><i class="bx plus"></i><svg class="dc fldr" viewBox="0 0 17 17"><use href="#fd"/></svg><span>通用</span></div>
<div class="row fold"><i class="bx minus"></i><svg class="dc fldr" viewBox="0 0 17 17"><use href="#fo"/></svg><span class="strong">工程</span></div>
</div>
<div class="branch sub">
<div class="row leaf"><svg class="dc" viewBox="0 0 17 17"><use href="#lg"/></svg><svg class="sy" viewBox="0 0 24 24"><use href="#sp1"/></svg><span>高程</span></div>
<div class="row leaf"><svg class="dc" viewBox="0 0 17 17"><use href="#lg"/></svg><svg class="sy" viewBox="0 0 24 24"><use href="#sp2"/></svg><span>岩性</span></div>
<div class="row leaf"><svg class="dc" viewBox="0 0 17 17"><use href="#lg"/></svg><svg class="sy" viewBox="0 0 24 24"><use href="#sp3"/></svg><span class="strong">界线</span></div>
<div class="row leaf"><svg class="dc" viewBox="0 0 17 17"><use href="#lg"/></svg><svg class="sy" viewBox="0 0 24 24"><use href="#sp4"/></svg><span>断层</span></div>
<div class="row leaf"><svg class="dc" viewBox="0 0 17 17"><use href="#lg"/></svg><svg class="sy" viewBox="0 0 24 24"><use href="#sp5"/></svg><span>水系</span></div>
<div class="row leaf"><svg class="dc" viewBox="0 0 17 17"><use href="#lg"/></svg><svg class="sy" viewBox="0 0 24 24"><use href="#sp6"/></svg><span>标注</span></div>
<div class="row leaf"><svg class="dc" viewBox="0 0 17 17"><use href="#lg"/></svg><svg class="sy" viewBox="0 0 24 24"><use href="#sp7"/></svg><span>原状样</span></div>
<div class="row leaf"><svg class="dc" viewBox="0 0 17 17"><use href="#lg"/></svg><svg class="sy" viewBox="0 0 24 24"><use href="#sp8"/></svg><span>扰动样</span></div>
<div class="row leaf"><svg class="dc" viewBox="0 0 17 17"><use href="#lg"/></svg><svg class="sy" viewBox="0 0 24 24"><use href="#sp9"/></svg><span>水位埋深</span></div>
<div class="row leaf"><svg class="dc" viewBox="0 0 17 17"><use href="#lg"/></svg><svg class="sy" viewBox="0 0 24 24"><use href="#sp10"/></svg><span>标贯测试</span></div>
<div class="row leaf"><svg class="dc" viewBox="0 0 17 17"><use href="#lg"/></svg><svg class="sy" viewBox="0 0 24 24"><use href="#sp11"/></svg><span>重Ⅱ测试</span></div>
<div class="row leaf"><svg class="dc" viewBox="0 0 17 17"><use href="#lg"/></svg><svg class="sy" viewBox="0 0 24 24"><use href="#sp12"/></svg><span>钻探</span></div>
</div>
</div>
<div class="sbar"><i class="sbtn up"></i><i class="thumb"><i class="gr"></i></i><i class="strack"></i><i class="sbtn dn"></i></div>
</div>
<footer class="ptabs">
<span class="ptab act first"><svg class="ti cut6" viewBox="0 0 16 16"><use href="#cg"/></svg>点图例</span>
<span class="ptab t2"><svg class="ti" viewBox="0 0 16 16"><use href="#lin"/></svg>线图例</span>
<span class="ptab t3"><svg class="ti" viewBox="0 0 16 16"><use href="#pat"/></svg>花纹图例</span>
</footer>
</section>

<section class="panel pb">
<header class="ptitle"><span class="cutl">颜色图例</span><span class="pbtns"><svg class="pi" viewBox="0 0 12 12"><use href="#pin"/></svg><svg class="pi" viewBox="0 0 10 10"><use href="#cl"/></svg></span></header>
<div class="ptools"><svg class="s off" viewBox="-1 -1 22 22"><use href="#gm1"/></svg><svg class="s k" viewBox="-1 -1 22 22"><use href="#gm2"/></svg><b class="sep w6"></b><svg class="s" viewBox="-1 -1 22 22"><use href="#pnew"/></svg><svg class="s" viewBox="-1 -1 22 22"><use href="#pfol"/></svg></div>
<div class="twrap">
<div class="tree">
<div class="row root"><i class="bx minus off2"></i><svg class="rt" viewBox="0 0 17 12"><use href="#rt"/></svg><span class="lb strong">新数据库7-5-1</span></div>
<div class="branch">
<div class="row leaf"><svg class="dc" viewBox="0 0 17 17"><use href="#col"/></svg><i class="sw black"></i><span>自定义...</span></div>
<div class="row leaf"><svg class="dc" viewBox="0 0 17 17"><use href="#col"/></svg><i class="sw"></i><span>透明</span></div>
<div class="row fold"><i class="bx plus"></i><svg class="dc fldr" viewBox="0 0 17 17"><use href="#fd"/></svg><span class="strong">通用</span></div>
<div class="row fold"><i class="bx plus"></i><svg class="dc fldr" viewBox="0 0 17 17"><use href="#fd"/></svg><span>第四系</span></div>
<div class="row fold"><i class="bx plus"></i><svg class="dc fldr" viewBox="0 0 17 17"><use href="#fd"/></svg><span>侵入体</span></div>
</div>
</div>
</div>
<footer class="ptabs">
<span class="ptab first"><svg class="ti cut6" viewBox="0 0 16 16"><use href="#cg"/></svg>标注样式</span>
<span class="ptab t4"><svg class="ti" viewBox="0 0 16 16"><use href="#txt"/></svg>字体图例</span>
<span class="ptab act t5"><svg class="ti" viewBox="0 0 16 16"><use href="#cg"/></svg>颜色图例</span>
</footer>
</section>
</aside>

<main class="work">
<div class="hruler">
<div class="hc firstc"><span class="mm">mm</span><span>0</span></div>
<div class="hc"><span>00</span><span>-50</span></div>
<div class="hc"><span>00</span><span>0</span></div>
<div class="hc"><span>00</span><span>50</span></div>
<div class="hc"><span>00</span><span>100</span></div>
<div class="hc"><span>00</span><span>150</span></div>
<div class="hc"><span>00</span><span>200</span></div>
<div class="hc"><span>00</span><span>250</span></div>
<div class="hc"><span>00</span><span>300</span></div>
<div class="hc"><span>00</span><span>350</span></div>
<div class="hc"><span>00</span><span>400</span></div>
<div class="hc"><span>00</span><span>450</span></div>
<div class="hc"><span>00</span></div>
<svg class="corner" viewBox="0 0 70 17"><path d="M17 17H46C56 17 56 1 66 0" fill="none" stroke="#777" stroke-width="1.500"/></svg>
</div>
<div class="mid">
<div class="vruler">
<svg class="curve" viewBox="0 0 17 60"><path d="M0 0C2 12 15 10 17 24" fill="none" stroke="#777" stroke-width="1.200"/></svg>
<svg class="curve low" viewBox="0 0 17 30"><path d="M0 0C2 12 15 10 17 24" fill="none" stroke="#777" stroke-width="1.200"/></svg>
<div class="vc firstv"><span></span><span class="up">00</span></div>
<div class="vc"><span>300</span><span class="up">00</span></div>
<div class="vc"><span>250</span><span class="up">00</span></div>
<div class="vc"><span>200</span><span class="up">00</span></div>
<div class="vc"><span>150</span><span class="up">00</span></div>
<div class="vc"><span>100</span><span class="up">00</span></div>
<div class="vc"><span>50</span><span class="up">00</span></div>
<div class="vc lastv"><span>0</span><span></span></div>
</div>
<div class="canvas">
<svg class="sheet" viewBox="272 87 1219 810" width="1219" height="810">
<rect x="557" y="203" width="853" height="603" fill="#808080"/>
<rect x="532" y="178.500" width="852" height="601" fill="#fff" stroke="#f010e8" stroke-width="2"/>
<path d="M1443 87V897M272 882.500H1491" stroke="#000" fill="none"/>
<text x="832" y="255" class="ttl">地形地质图</text>
<rect x="584" y="269" width="497" height="461" fill="none" stroke="#000"/>
<rect x="589.500" y="275.500" width="485" height="448" fill="none" stroke="#000"/>
<text x="832" y="274.500" class="t6">新形尺：1:10000</text>
<path d="M589 285H1075M589 713.500H1075M600.500 275V724M1064.500 275V724" stroke="#000" fill="none"/>
<rect x="611" y="274" width="442" height="22" fill="url(#pt)"/>
<rect x="611" y="703" width="442" height="22" fill="url(#pb)"/>
<rect x="589" y="296" width="22" height="407" fill="url(#pl)"/>
<rect x="1053" y="296" width="22" height="407" fill="url(#pr)"/>
<path d="M611 285H1053M611 713.500H1053M600.500 296V703M1064.500 296V703" stroke="#000" fill="none"/>
<circle cx="600.500" cy="285" r="11" fill="#f00"/><circle cx="1064.500" cy="285" r="11" fill="#f00"/><circle cx="600.500" cy="713.500" r="11" fill="#f00"/><circle cx="1064.500" cy="713.500" r="11" fill="#f00"/>
<rect x="611.500" y="296.500" width="441" height="406" fill="none" stroke="#000"/>
<rect x="617.500" y="302.500" width="429" height="394" fill="#fff" stroke="#000"/>
<path d="M622.500 303V696" stroke="#000" stroke-width="2"/>
<path d="M640.500 303V696" stroke="#333"/>
<g clip-path="url(#wetc)"><rect x="640" y="302" width="407" height="300" fill="url(#marsh)"/></g>
<g class="fine" clip-path="url(#mapc)">
<path d="M915 305C905 330 885 338 875 352M905 420C920 445 960 455 1000 470C1020 490 1030 505 1040 525M975 602L1040 480M945 585C980 580 1010 560 1046 560" class="dot"/>
<path d="M640 342.500H772L778 348 872 562" class="road"/><path d="M640 342.500H772L778 348 872 562" class="roadin"/>
<path d="M667 345L681 487" class="road"/><path d="M667 345L681 487" class="roadin"/>
<path d="M681 487L820 453" class="road thin"/><path d="M681 487L820 453" class="roadin thinin"/>
<path d="M950 592L1047 573" class="road thin"/><path d="M950 592L1047 573" class="roadin thinin"/>
<path d="M694 365L755 363 765 460 706 478zM728 365L738 470M716 345L720 364M731 345V364"/>
<path d="M655 345C660 380 650 420 645 452C640 480 650 505 660 515M681 490C660 497 650 512 655 540C660 570 700 585 717 612C705 640 702 660 712 690M700 500C720 520 722 560 730 605M820 455C835 490 855 530 868 555M730 600L760 612 750 660 724 680M640 620C660 610 655 650 640 655"/>
<path d="M650 460C660 445 668 455 672 475C668 500 655 495 650 480z"/>
<path d="M870 570L885 566 890 580 874 582zM905 578H928L938 592 925 605 910 590zM830 572L905 610 985 660 1047 692M825 578L900 620 980 670 1040 697"/>
<path d="M850 565C855 572 850 575 870 575M945 600C950 590 965 590 985 585"/>
<g class="vil"><rect x="945" y="630" width="7" height="4"/><rect x="957" y="640" width="5" height="7"/><rect x="950" y="652" width="8" height="4"/><rect x="970" y="640" width="6" height="8"/><rect x="980" y="655" width="9" height="3"/><rect x="972" y="670" width="8" height="5"/><rect x="990" y="672" width="10" height="6"/><rect x="1005" y="682" width="8" height="3"/><rect x="1020" y="684" width="10" height="4"/><rect x="940" y="612" width="6" height="3"/><rect x="835" y="578" width="6" height="4"/><rect x="818" y="582" width="8" height="3"/><rect x="962" y="652" width="5" height="5"/><rect x="952" y="662" width="6" height="3"/><rect x="984" y="640" width="5" height="7"/><rect x="1010" y="672" width="12" height="4"/><rect x="996" y="686" width="6" height="4"/><rect x="925" y="622" width="6" height="3"/><rect x="900" y="575" width="8" height="3"/></g>
<g clip-path="url(#hillc)" class="cont">
<use href="#blob" transform="translate(838 655) scale(.1 .08)"/><use href="#blob2" transform="translate(838 655) scale(.14 .12)"/><use href="#blob" transform="translate(838 655) scale(.18 .15)"/><use href="#blob2" transform="translate(838 655) scale(.22 .19)"/><use href="#blob" transform="translate(838 655) scale(.26 .22)"/><use href="#blob2" transform="translate(838 655) scale(.3 .26)"/><use href="#blob" transform="translate(838 655) scale(.34 .3)"/><use href="#blob2" transform="translate(838 655) scale(.38 .34)"/><use href="#blob" transform="translate(838 655) scale(.42 .37)"/><use href="#blob2" transform="translate(838 655) scale(.46 .42)"/><use href="#blob" transform="translate(838 655) scale(.5 .45)"/><use href="#blob2" transform="translate(840 655) scale(.56 .5)"/><use href="#blob" transform="translate(840 655) scale(.6 .55)"/><use href="#blob2" transform="translate(842 652) scale(.66 .6)"/><use href="#blob" transform="translate(842 652) scale(.7 .65)"/><use href="#blob2" transform="translate(844 650) scale(.76 .7)"/><use href="#blob" transform="translate(844 650) scale(.8 .75)"/><use href="#blob2" transform="translate(846 648) scale(.86 .8)"/><use href="#blob" transform="translate(846 648) scale(.9 .85)"/><use href="#blob2" transform="translate(848 648) scale(.96 .9)"/><use href="#blob" transform="translate(848 648) scale(1 .95)"/><use href="#blob2" transform="translate(850 648) scale(1.06 1.02)"/><use href="#blob" transform="translate(850 648) scale(1.1 1.1)"/><use href="#blob2" transform="translate(852 648) scale(1.16 1.18)"/><use href="#blob" transform="translate(852 648) scale(1.2 1.25)"/><use href="#blob2" transform="translate(856 648) scale(1.28 1.32)"/><use href="#blob" transform="translate(856 648) scale(1.32 1.4)"/><use href="#blob2" transform="translate(860 648) scale(1.4 1.48)"/><use href="#blob" transform="translate(860 648) scale(1.44 1.55)"/><use href="#blob2" transform="translate(866 648) scale(1.52 1.65)"/><use href="#blob" transform="translate(866 648) scale(1.58 1.75)"/><use href="#blob2" transform="translate(870 648) scale(1.66 1.88)"/><use href="#blob" transform="translate(870 648) scale(1.72 2)"/>
<path d="M762 625L850 655M868 610V660"/>
</g>
<g clip-path="url(#lowc)" class="cont">
<use href="#blob2" transform="translate(695 690) scale(.2 .2)"/><use href="#blob" transform="translate(695 690) scale(.32 .36)"/><use href="#blob2" transform="translate(695 690) scale(.44 .6)"/><use href="#blob" transform="translate(695 690) scale(.56 .85)"/><use href="#blob2" transform="translate(695 690) scale(.68 1.15)"/><use href="#blob" transform="translate(695 690) scale(.8 1.45)"/>
</g>
</g>
<path d="M617 406.500H1053M617 618.500H1053" stroke="#000"/>
<path d="M762.500 303V696M974.500 303V696" stroke="#000"/>
<path d="M657.500 303V316M869.500 303V316M657.500 396V417M869.500 396V417M645 512.500H668M657.500 502V523M751 512.500H774M858 512.500H880M869.500 502V523M963 512.500H986M657.500 608V630M869.500 608V660M869.500 686V696M657.500 686V696M1042 406.500H1053M611 512.500H619M1045 512.500H1053" stroke="#000"/>
<text x="624" y="407" class="t45">45</text><text x="625" y="618" class="t45">44</text>
<text x="657" y="301" class="t6">56.50</text><text x="762" y="301" class="t6">57.00</text><text x="868" y="301" class="t6">57.50</text><text x="974" y="301" class="t6">58.00</text>
<text x="657" y="703" class="t6">56.50</text><text x="762" y="703" class="t6">57.00</text><text x="868" y="703" class="t6">57.50</text><text x="974" y="703" class="t6">58.00</text>
<text x="656" y="444" class="t7">0.5</text><text x="732" y="496" class="t7">-0.5</text><text x="786" y="516" class="t7">-1.0</text><text x="844" y="543" class="t7">-1.2</text><text x="688" y="559" class="t7">-1.0</text><text x="778" y="576" class="t7">-1.0</text><text x="999" y="624" class="t7">-1.0</text><text x="825" y="609" class="t7">43.3</text><text x="842" y="661" class="t7">670.8</text><text x="1029" y="423" class="t7">鱼塘</text><text x="787" y="347" class="t7">5.2</text><text x="677" y="352" class="t7">6.7</text>

<text x="1132" y="290" class="t8 st">工程图</text><text x="1178" y="290" class="t8 st big8">例</text>
<rect x="1132.500" y="302.500" width="31" height="21" fill="#fff" stroke="#000"/>
<path d="M1133 313c4 2 6 4 10 1s6-7 10-6 6 3 9 6" fill="none" stroke="#b0503a"/>
<text x="1170" y="316" class="t8 st">地层界线</text>

<g class="tbl">
<rect x="1132.500" y="591.500" width="190" height="127"/>
<path d="M1132 606.500H1323M1132 622.500H1323M1132 637.500H1323M1132 650.500H1323M1132 664.500H1323M1132 678.500H1323M1132 691.500H1323M1132 705.500H1323M1179.500 637V719M1227.500 637V719M1274.500 637V719"/>
</g>
<text x="1227" y="602" class="t9 mid">福建省第四地质大队</text>
<text x="1227" y="618" class="t9 mid sp1">福建省寿宁县银金多金属矿区</text>
<text x="1227" y="633" class="t9 mid">地形地质图</text>
<text x="1155" y="647" class="t8 mid">拟　　稿</text><text x="1251" y="647" class="t8 mid">资料来源</text><text x="1298" y="647" class="t8 mid">编　　例</text>
<text x="1155" y="661" class="t8 mid">审　　核</text><text x="1251" y="661" class="t8 mid">水平比例</text><text x="1298" y="661" class="t7 mid">1:10000</text>
<text x="1155" y="675" class="t8 mid">制　　图</text><text x="1251" y="675" class="t8 mid">垂直比例</text><text x="1298" y="675" class="t7 mid">1:10000</text>
<text x="1155" y="688" class="t8 mid">项目负责</text><text x="1251" y="688" class="t8 mid">日　　期</text><text x="1298" y="688" class="t7 mid">2017-7-11</text>
<text x="1155" y="702" class="t8 mid">总工程师</text><text x="1251" y="702" class="t8 mid">图　　号</text>
<text x="1155" y="715" class="t8 mid">大 队 长</text><text x="1251" y="715" class="t8 mid">顺 序 号</text>
</svg>
</div>
</div>
<div class="dtabs">
<span class="dt d1"><svg class="di" viewBox="0 0 16 16"><use href="#home"/></svg><span><span class="lat">YTLWorld</span>起始页</span><svg class="dx" viewBox="0 0 9 9"><use href="#xx"/></svg></span>
<span class="dt d2"><svg class="di" viewBox="0 0 16 16"><use href="#globe"/></svg><span>空间图形编辑</span><svg class="dx" viewBox="0 0 9 9"><use href="#xx"/></svg></span>
<span class="dt act"><svg class="di" viewBox="0 0 16 16"><use href="#lay"/></svg><span>布局图形编辑</span><svg class="dx" viewBox="0 0 9 9"><use href="#xx"/></svg></span>
</div>
</main>
</div>

<div class="bar b1">
<b class="hd">创建花纹图框<span class="co">：</span></b>
<span class="n">当前图层:</span><a class="lnk tt2">新布局图层</a><b class="vs"></b>
<i class="ck"></i><span class="tt2">角点图例<span class="gg">&gt;&gt;</span></span><a class="lnk">原状样</a><b class="vs"></b>
<i class="ck on">✓</i><span class="tt2">边点图例<span class="gg">&gt;&gt;</span></span><a class="lnk">界线</a>
<span class="n">点图例宽(mm)</span><span class="inp w33 tt2">10.0</span>
<span class="n">点图例高(mm)</span><span class="inp w33 tt2">10.0</span><b class="vs"></b>
<span class="n">线间距(mm)</span><span class="inp w33 tt2">10.0</span>
<i class="ck"></i><span class="tt">创建简单双线图框(无点图例花纹)</span>
</div>
<div class="bar b2">
<b class="hd">对角点位置<span class="co">：</span></b>
<span class="n">第一角点位置(mm)<span class="gg">&gt;&gt;</span></span><span class="n g11">水平</span><span class="inp w79 tt"></span>
<span class="n">垂直</span><span class="inp w73 tt"></span><b class="vs"></b>
<span class="n">第二角点<span class="gg">&gt;&gt;</span></span><span class="n g10">水平</span><span class="inp w79 tt"></span>
<span class="n">垂直</span><span class="inp w73 tt"></span><b class="vs"></b>
<i class="ck g7"></i><span class="tt">输入高宽</span>
</div>
<div class="foot"></div>
</div>
</body>
</html>
```

FILE: styles.css
```css
*{box-sizing:border-box}
html,body{margin:0;height:100%;overflow:hidden}
body{background:#555;font:12px/16px "Noto Sans CJK SC","Liberation Sans",sans-serif;color:#222}
i{font-style:normal}
.defs{position:absolute;width:0;height:0}
.app{display:flex;flex-direction:column;width:1491px;height:998px;overflow:hidden}

.menu{display:flex;gap:15px;height:18px;padding-left:2px;line-height:12px;background:#4e4e4e;color:#e4e4e4;white-space:nowrap;flex:none}

.tb{display:flex;height:26px;padding-top:1px;background:#555;flex:none;overflow:hidden}
.pill{display:flex;align-items:center;height:23px;padding:0 5px 0 0;background:linear-gradient(#d2d5db,#c2c5cb 50%,#a6a9ae);flex:none;border-radius:3px 0 0 3px}
.pill.grow{flex:1;padding-right:0}
.pill.p4{padding-right:4px}
.first1{margin-left:-4px;padding-right:3px}
.first2{margin-left:-6px;padding-right:4px}
.chev{display:block;position:relative;flex:none;width:10px;height:23px;background:linear-gradient(#8e8f92,#6c6d70)}
.chev.wide{margin-right:1px}
.chev::after{content:"";position:absolute;left:2px;bottom:3px;width:6px;height:4px;border-top:1px solid #fff;background:linear-gradient(135deg,#fff 50%,transparent 50%) no-repeat 1px 1px/5px 3px}
.grip{flex:none;display:block;width:8px;height:14px;margin-left:0;background:radial-gradient(circle at 1.500px 1.500px,#222 1.200px,transparent 1.400px) 3px 0/3px 4px repeat-y}
.s{display:block;flex:none;width:22px;height:22px}
.sep{display:block;flex:none;width:6px;height:17px;background:linear-gradient(#555,#555) center/1px 100% no-repeat}
.sep.w6{width:14px}
.sep.w11{width:11px}
.sep.w8{width:8px}
.combo{position:relative;display:block;flex:none;height:20px;background:#eef0f3;border:1px solid #c5c8cd}
.combo.big{width:186px;margin-left:6px}
.combo.small{width:34px;margin-right:4px}
.car{position:absolute;right:5px;top:50%;margin-top:-1px;width:0;height:0;border:4px solid transparent;border-top-color:#666;border-bottom:0}
.cr{position:relative;display:block;flex:none;width:10px;height:22px}
.cr.c13{width:14px}
.cr .car{right:1px;border-top-color:#777}
.fmt{display:block;flex:none;width:22px;text-align:center;font:bold 14px/22px "Liberation Serif",serif;color:#333}
.fmt.it{font-style:italic}
.fmt.u{text-decoration:underline}
.fmt.a{font-size:17px;color:#555}
.gl{font:bold 13px "Liberation Sans",sans-serif;text-anchor:middle;fill:#fff}
.gl.blue{fill:#1f3fd0}
.gl.red{fill:#b01818}
.gl.bd{font-size:11px}
.gl.big{font-size:15px}
.gl.big2{font-size:13px;text-anchor:start}
.gl.violet{fill:#a040c0}
.tiny{font:6px "Liberation Sans",sans-serif;fill:#333}

.main{display:flex;height:856px;flex:none}
.dock{display:flex;flex-direction:column;width:250px;flex:none}
.panel{display:flex;flex-direction:column;overflow:hidden}
.pa{height:449px;margin-bottom:5px}
.pb{height:398px}
.ptitle{display:flex;justify-content:space-between;align-items:center;height:20px;padding:0 0 4px 2px;background:#9b9d9b;color:#5f5f5f;flex:none;font-size:13px;overflow:hidden}
.cutl{margin-left:-11px}
.pbtns{display:flex;gap:6px;padding-right:4px;align-items:center}
.pi{display:block;width:11px;height:11px}
.ptools{display:flex;align-items:center;height:26px;margin-top:0;border-top:2px solid #e6e6e6;background:linear-gradient(#d4d7dc,#c2c5cb 50%,#9fa2a7);padding-left:0;flex:none}
.ptools .off{margin-left:-8px}
.ptools .k{margin-left:-6px}
.ptools .sep{margin-left:-1px}
.twrap{display:flex;flex:1;min-height:0;background:#fff;border-right:3px solid #cfd0d0}
.tree{flex:1;overflow:hidden;padding-top:2px;font-size:12px}
.row{position:relative;display:flex;align-items:center;height:24px;white-space:nowrap}
.root{padding-left:14px}
.root .off2{position:absolute;left:-3px;top:8px}
.root::before{content:"";position:absolute;left:5px;width:9px;top:12px;border-top:1px dotted #777}
.rt{display:block;width:17px;height:12px;margin-top:-6px;flex:none}
.lb{margin-left:6px}
.strong{font-weight:700;color:#111}
.branch{position:relative;margin-left:22px}
.branch::before{content:"";position:absolute;left:0;top:-6px;bottom:12px;border-left:1px dotted #777}
.branch.sub{margin-left:42px}
.branch.sub::before{bottom:0}
.row::after{content:"";position:absolute;left:0;width:12px;top:12px;border-top:1px dotted #777}
.root::after{display:none}
.leaf{padding-left:12px}
.dc{position:relative;display:block;width:17px;height:17px;flex:none}
.sy{display:block;width:24px;height:24px;flex:none;margin:0 6px 0 6px;overflow:visible}
.fold{padding-left:13px}
.fldr{margin-right:5px}
.bx{position:absolute;z-index:1;left:-4px;top:8px;width:9px;height:9px;background:#fff;border:1px solid #888}
.bx::before{content:"";position:absolute;left:1px;right:1px;top:3px;height:1px;background:#111}
.bx.plus::after{content:"";position:absolute;top:1px;bottom:1px;left:3px;width:1px;background:#111}
.sw{display:block;flex:none;width:21px;height:13px;margin:0 7px 0 8px;border:1px solid #111;background:#fff}
.sw.black{background:#000}
.sbar{display:flex;flex-direction:column;width:15px;flex:none;background:#eceded;border-left:1px solid #e2e2e2}
.sbtn{position:relative;display:block;height:17px;flex:none;background:linear-gradient(90deg,#f4f4f4,#dedede)}
.sbtn::after{content:"";position:absolute;left:3px;top:6px;border:4px solid transparent;border-top:0;border-bottom-color:#444}
.sbtn.dn::after{border-bottom:0;border-top:4px solid #444;border-left-color:transparent}
.thumb{position:relative;display:block;height:288px;flex:none;background:linear-gradient(90deg,#e9e9e9,#dcdcdc,#cfcfcf);border:1px solid #aaa}
.gr{position:absolute;left:3px;right:3px;top:139px;height:7px;background:repeating-linear-gradient(#777 0 1px,transparent 1px 3px)}
.strack{display:block;flex:1}

.ptabs{display:flex;height:25px;background:#505050;color:#d8d8d8;flex:none;align-items:center;overflow:hidden;white-space:nowrap}
.ptab{display:flex;align-items:center;gap:2px;height:23px}
.ptab.act{background:linear-gradient(#fafafa,#d9dcdf);color:#333;border-radius:0 0 4px 4px;margin-top:-2px}
.ptab.first{margin-left:-9px;padding-right:4px}
.ti{display:block;width:16px;height:16px;flex:none}
.ptab.t2{margin-left:7px}
.ptab.t3{margin-left:11px}
.ptab.t4{margin-left:7px}
.ptab.t5{margin-left:8px;padding:0 3px}

.work{display:flex;flex-direction:column;flex:1;min-width:0;padding-left:5px}
.hruler{position:relative;display:flex;height:17px;flex:none;background:linear-gradient(#8b8b8b,#eee 15%,#fff 50%,#ddd 70%,#7f7f7f 96%);font:12px/16px "Liberation Serif",serif;color:#444;overflow:hidden}
.hc{display:flex;justify-content:space-between;flex:0 0 105.900px;padding:0 1px;border-right:1px solid #111}
.hc.firstc{flex-basis:67px}
.hc:last-of-type{border-right:0}
.mm{color:#222}
.corner{position:absolute;left:0;top:0;width:70px;height:17px}
.mid{display:flex;height:810px;flex:none}
.vruler{position:relative;display:flex;flex-direction:column;width:17px;flex:none;background:linear-gradient(90deg,#a2a2a2,#f4f4f4 25%,#fff 60%,#c6c6c6 85%,#8d8d8d);font:12px/15px "Liberation Serif",serif;color:#444;overflow:hidden}
.curve{position:absolute;left:0;top:8px;width:17px;height:60px}
.curve.low{top:764px;height:30px}
.vc{display:flex;flex-direction:column;justify-content:space-between;flex:0 0 106px;border-bottom:1px solid #000}
.vc.firstv{flex-basis:60px}
.vc.lastv{flex:1;border-bottom:0}
.vc span{writing-mode:vertical-rl;transform:rotate(180deg);margin:1px 0 0 1px}
.vc span.up{margin:0 0 2px 1px}
.canvas{flex:1;min-width:0;background:#fff;overflow:hidden}
.sheet{display:block}
.ttl{font:16px "Noto Sans CJK SC",sans-serif;fill:#e81010;text-anchor:middle}
.t6{font:6px "Liberation Sans",sans-serif;fill:#555;text-anchor:middle}
.t7{font:6.500px "Noto Sans CJK SC",sans-serif;fill:#333}
.t8{font:7.500px "Noto Sans CJK SC",sans-serif;fill:#333}
.t9{font:9px "Noto Sans CJK SC",sans-serif;fill:#333}
.t45{font:9px "Liberation Sans",sans-serif;fill:#222}
text.mid{text-anchor:middle}
.sp1{letter-spacing:.3px}
.st{text-anchor:start}
.big8{font-size:10px}
.fine{fill:none;stroke:#111;stroke-width:.8}
.fine text{stroke:none}
.dot{stroke:#666;stroke-dasharray:1.500 2}
.road{stroke:#222;stroke-width:4.500}
.roadin{stroke:#fff;stroke-width:3;stroke-dasharray:5 .7}
.thin{stroke-width:3.600}
.thinin{stroke-width:2}
.vil rect{fill:#444;stroke:#000;stroke-width:.6}
.cont{stroke:#111;stroke-width:.8;fill:none}
#blob,#blob2{vector-effect:non-scaling-stroke}
.tbl{fill:none;stroke:#000}

.dtabs{display:flex;align-items:stretch;height:24px;margin-top:1px;padding:0 0 0 15px;background:#9c9e9c;border-bottom:2px solid #f2f2f2;flex:none}
.dt{display:flex;align-items:center;color:#222;margin-right:15px}
.lat{letter-spacing:-.6px}
.di{display:block;width:16px;height:16px;margin-right:5px;flex:none}
.d1 .di{margin-right:3px}
.dx{display:block;width:9px;height:9px;margin-left:10px;flex:none}
.d1 .dx{margin-left:12px}
.dt.d2{margin-right:9px}
.dt.act{margin:0;padding:0 7px 0 6px;background:#fff;color:#1218d8;border-bottom:1px solid #fff}

.bar{display:flex;align-items:center;flex:none;white-space:nowrap;overflow:hidden}
.b1{height:23px;background:#9c9e9c}
.b2{height:44px;background:#fff}
.hd{font-weight:700;color:#111}
.co{display:inline-block;padding-left:8px;margin-right:-8px}
.gg{letter-spacing:1px}
.bar>*{margin-left:9px}
.b1>.hd{margin-left:-7px}
.b2>.hd{margin-left:-8px}
.b1>.n:first-of-type{margin-left:10px}
.bar>.tt{margin-left:3px}
.bar>.tt2{margin-left:2px}
.bar>.g11{margin-left:11px}
.bar>.g10{margin-left:10px}
.bar>.g7{margin-left:7px}
.lnk{color:#1218d8}
.vs{display:block;width:1px;height:18px;background:#222}
.ck{display:block;width:12px;height:12px;flex:none;border:1px solid #888;background:linear-gradient(135deg,#ccc,#f4f4f4);font:bold 10px/10px "DejaVu Sans",sans-serif;color:#2b4fb5;text-align:center}
.inp{display:block;height:19px;flex:none;background:#fff;border:1px solid #7f9db9;padding-left:2px;line-height:17px;font-family:"Liberation Sans",sans-serif}
.b1 .inp{border-color:#aac0dc}
.w33{width:33px}
.w79{width:79px}
.w73{width:73px}
.foot{flex:1;background:#3f3f3f;border-top:1px solid #888}
```
